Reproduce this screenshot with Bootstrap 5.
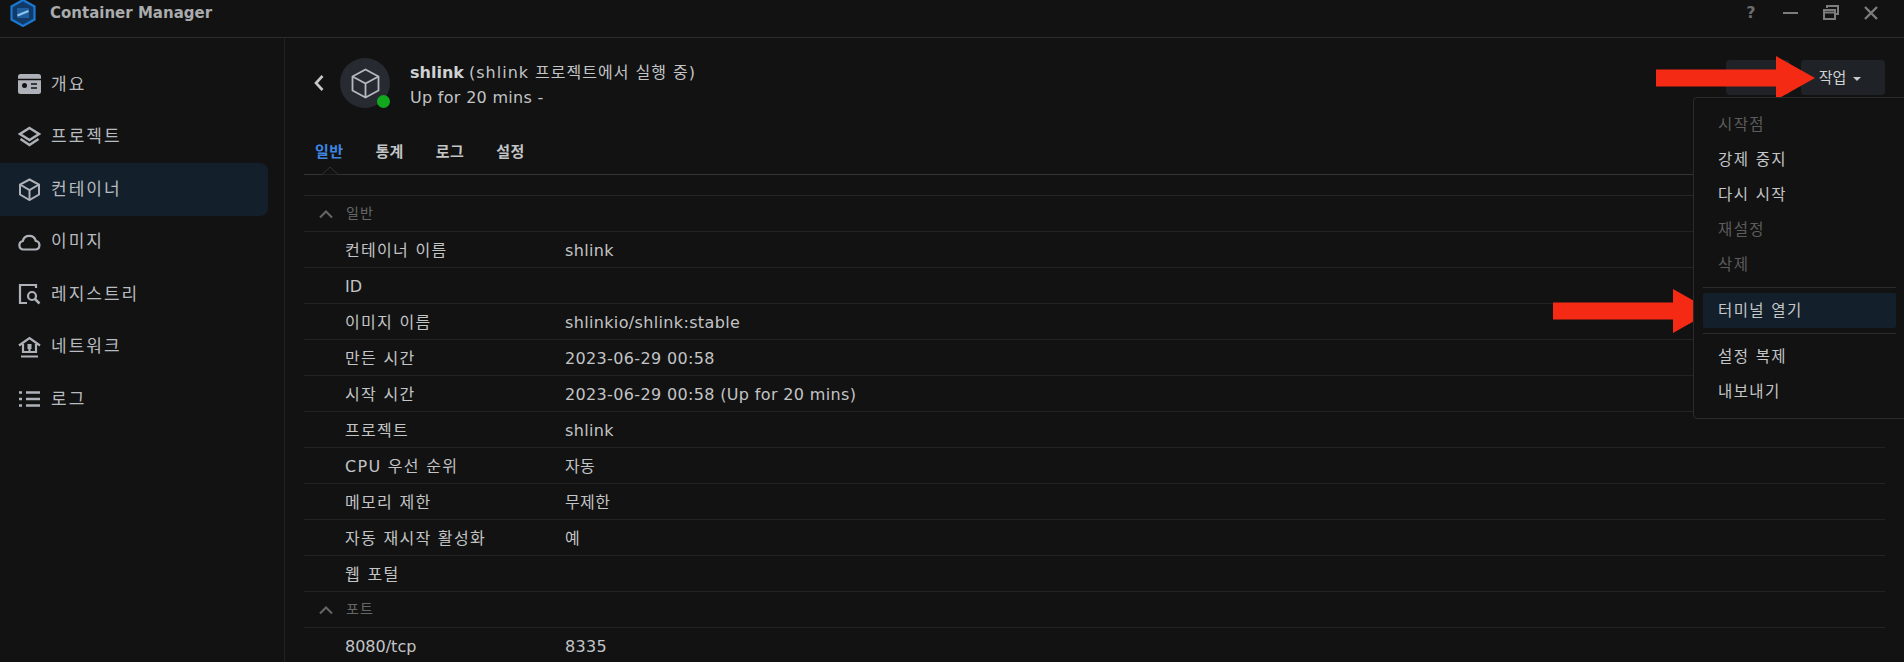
<!DOCTYPE html>
<html lang="ko">
<head>
    <meta charset="UTF-8">
    <meta name="viewport" content="width=device-width, initial-scale=1.0">
    <title>Container Manager</title>
    <link href="https://cdn.jsdelivr.net/npm/bootstrap@5.3.0/dist/css/bootstrap.min.css" rel="stylesheet">
    <style>
        html, body { height: 662px; overflow: hidden; }
        body { background: #121212; color: #c2c4c6; font-family: "DejaVu Sans", "Noto Sans CJK KR", sans-serif; font-size: 16px; }
        .app-frame { width: 1904px; height: 662px; position: relative; overflow: hidden; }
        .title-bar { height: 38px; border-bottom: 1px solid #2c2c2c; padding: 0 25px 11px 9px; }
        .app-title { font-size: 15px; font-weight: 700; color: #a9abad; margin-left: 13px; }
        .win-btns { gap: 24px; }
        .win-btns svg { display: block; }
        .help-mark { width: 16px; text-align: center; font-size: 16px; line-height: 16px; font-weight: 700; color: #6c6c6c; }
        .side-pane { width: 285px; height: 624px; border-right: 1px solid #222; padding-top: 20px; flex: none; }
        .side-link { height: 52.5px; width: 268px; padding-left: 18px; gap: 10px; color: #b8bbbf; border-radius: 0 8px 8px 0; letter-spacing: 2px; font-size: 17px; }
        .side-link.is-on { background: #13202c; }
        .main-pane { padding: 20px 19px 0 19px; min-width: 0; }
        .crumb-head { height: 50px; }
        .back-btn { width: 36px; padding-left: 1px; }
        .avatar-wrap { width: 50px; height: 50px; border-radius: 50%; background: #272b31; position: relative; }
        .status-dot { width: 13px; height: 13px; border-radius: 50%; background: #12a81e; position: absolute; right: 0; bottom: 0; border: 0; }
        .head-text { margin-left: 20px; padding-top: 3px; line-height: 25px; color: #c2c4c6; }
        .head-text b { color: #d0d1d2; }
        .head-paren { letter-spacing: 1px; }
        .head-state { letter-spacing: .3px; }
        .head-btn { height: 35px; background: #1f2327; border: 0; border-radius: 4px; color: #d0d2d4; font-size: 15px; }
        .btn-blank { width: 64px; margin-right: 11px; }
        .btn-action { width: 84px; padding: 2px 6px 0 0; }
        .action-caret { display: inline-block; border: 4px solid transparent; border-top-color: #c8cacc; border-bottom: 0; margin-left: 7px; vertical-align: 2px; }
        .head-tools { margin-top: 2px; }
        .tab-strip { height: 67px; border-bottom: 1px solid #333; position: relative; gap: 32px; padding-left: 11px; align-items: flex-end; }
        .tab-link { font-size: 15px; font-weight: 700; color: #c2c4c6; padding: 0 0 11px 0; letter-spacing: .4px; line-height: 22px; }
        .tab-link.is-on { color: #3f86e0; }
        .tab-notch { position: absolute; left: 15px; bottom: -1px; display: block; }
        .info-table { width: 100%; margin-top: 20px; border-top: 1px solid #262626; }
        .info-table td { height: 36px; padding: 3px 0 0 0; border-bottom: 1px solid #222; vertical-align: middle; line-height: 1; letter-spacing: .35px; }
        .info-table .key-cell { width: 261px; padding-left: 41px; letter-spacing: 1.3px; }
        .info-table .key-cell.key-latin { letter-spacing: 0; }
        .info-table .sect-cell { padding: 0 0 2px 14px; color: #666; font-size: 14px; letter-spacing: 1px; }
        .sect-cell svg { margin-right: 12px; vertical-align: -1px; }
        .action-menu { display: block; position: absolute; left: 1693px; top: 97px; width: 220px; height: 322px; margin: 0; background: #121212; border: 1px solid #2b2b2b; border-radius: 4px; padding: 9px; }
        .action-menu .dropdown-item { height: 35px; line-height: 37px; padding: 0 0 0 15px; color: #c4c6c8; font-size: 15.5px; letter-spacing: 1.4px; width: 193px; border-radius: 2px; }
        .action-menu .dropdown-item.disabled { color: #5c5c5c; }
        .action-menu .dropdown-item.is-on { background: #13202c; margin: 0 0 1px 0; }
        .action-menu .dropdown-divider { border-color: #2b2b2b; margin: 5px 0; width: 193px; opacity: 1; }
        .red-arrow { position: absolute; display: block; }
        .arrow-action { left: 1656px; top: 56px; }
        .arrow-terminal { left: 1553px; top: 289px; }
    </style>
</head>
<body>
    <div class="app-frame">
        <div class="title-bar d-flex align-items-center">
            <svg width="28" height="28" viewBox="0 0 28 28" class="flex-shrink-0">
                <path d="M14 1 25.5 7.5v13L14 27 2.5 20.5v-13z" fill="#123a68" stroke="#1a78d0" stroke-width="2.200"/>
                <path d="M8 9h12v10H8z" fill="#1f5d9e"/>
                <path d="M8.500 16.500l11-4.500" stroke="#8fc6ee" stroke-width="2"/>
            </svg>
            <span class="app-title">Container Manager</span>
            <div class="win-btns d-flex align-items-center ms-auto">
                <span class="help-mark">?</span>
                <svg width="16" height="16" viewBox="0 0 16 16"><path d="M0 8h15" stroke="#7c7c7c" stroke-width="2"/></svg>
                <svg width="16" height="16" viewBox="0 0 16 16"><path d="M4 3V1h11v8h-2M1 5h11v9H1zM1 7.500h11" fill="none" stroke="#7c7c7c" stroke-width="2"/></svg>
                <svg width="16" height="16" viewBox="0 0 16 16"><path d="M2 2l12 12M14 2 2 14" stroke="#7c7c7c" stroke-width="2.400"/></svg>
            </div>
        </div>

        <div class="d-flex">
            <nav class="side-pane nav flex-column flex-nowrap">
                <a class="side-link d-flex align-items-center text-decoration-none" href="#">
                    <svg width="23" height="20" viewBox="0 0 23 20"><rect width="23" height="20" rx="2.500" fill="#aeb2b8"/><path d="M0 5.500h23" stroke="#121212" stroke-width="1.500"/><circle cx="6.500" cy="11.500" r="2.500" fill="#121212"/><path d="M13 10h6M13 14h6" stroke="#121212" stroke-width="1.500"/></svg>
                    <span>개요</span>
                </a>
                <a class="side-link d-flex align-items-center text-decoration-none" href="#">
                    <svg width="23" height="22" viewBox="0 0 23 22" fill="none" stroke="#aeb2b8" stroke-width="2.400"><path d="M11.500 2 21 8l-9.500 6L2 8z"/><path d="M2.500 13l9 6 9-6"/></svg>
                    <span>프로젝트</span>
                </a>
                <a class="side-link is-on d-flex align-items-center text-decoration-none" href="#">
                    <svg width="23" height="23" viewBox="0 0 23 23" fill="none" stroke="#aeb2b8" stroke-width="2"><path d="M11.500 1.500 21 6.500v10l-9.500 5.500L2 16.500v-10z"/><path d="M2 6.500l9.500 5.500L21 6.500M11.500 12v10"/></svg>
                    <span>컨테이너</span>
                </a>
                <a class="side-link d-flex align-items-center text-decoration-none" href="#">
                    <svg width="23" height="18" viewBox="0 0 23 18" fill="none" stroke="#aeb2b8" stroke-width="2.200"><path d="M6 16.500H5.500a4.300 4.300 0 0 1-.7-8.500 6.700 6.700 0 0 1 13 0 4.300 4.300 0 0 1 0 8.500z"/></svg>
                    <span>이미지</span>
                </a>
                <a class="side-link d-flex align-items-center text-decoration-none" href="#">
                    <svg width="23" height="22" viewBox="0 0 23 22" fill="none" stroke="#aeb2b8" stroke-width="2.200"><path d="M18 5V2H2v18h7"/><circle cx="14" cy="13" r="4"/><path d="M17 16l4.500 4.500" stroke-width="2.500"/></svg>
                    <span>레지스트리</span>
                </a>
                <a class="side-link d-flex align-items-center text-decoration-none" href="#">
                    <svg width="23" height="22" viewBox="0 0 23 22" fill="none" stroke="#aeb2b8" stroke-width="2.200"><path d="M1 9.500 11.500 2 22 9.500M5 8v8h13V8"/><rect x="9.500" y="8" width="4" height="5" fill="#aeb2b8" stroke="none"/><path d="M11.500 13v4M3 20.500h17"/></svg>
                    <span>네트워크</span>
                </a>
                <a class="side-link d-flex align-items-center text-decoration-none" href="#">
                    <svg width="23" height="18" viewBox="0 0 23 18" fill="none" stroke="#aeb2b8" stroke-width="2.500"><path d="M1 2.500h3M8 2.500h14M1 9h3M8 9h14M1 15.500h3M8 15.500h14"/></svg>
                    <span>로그</span>
                </a>
            </nav>

            <main class="main-pane flex-grow-1">
                <div class="crumb-head d-flex align-items-center">
                    <div class="back-btn d-flex">
                        <svg width="12" height="18" viewBox="0 0 12 18" class="ms-2"><path d="M9.500 2 3 9l6.500 7" fill="none" stroke="#c8c8c8" stroke-width="2.600"/></svg>
                    </div>
                    <div class="avatar-wrap d-flex align-items-center justify-content-center">
                        <svg width="29" height="31" viewBox="0 0 29 31" fill="none" stroke="#b6b9bd" stroke-width="1.800"><path d="M14.500 1.500 27.500 8.500v14l-13 7-13-7v-14z" stroke-linejoin="round"/><path d="M1.500 8.500l13 7 13-7M14.500 15.500v14"/></svg>
                        <span class="status-dot"></span>
                    </div>
                    <div class="head-text">
                        <div><b>shlink</b> <span class="head-paren">(shlink 프로젝트에서 실행 중)</span></div>
                        <div class="head-state">Up for 20 mins -</div>
                    </div>
                    <div class="head-tools d-flex ms-auto align-self-start">
                        <button class="btn head-btn btn-blank" type="button"></button>
                        <button class="btn head-btn btn-action" type="button">작업<span class="action-caret"></span></button>
                    </div>
                </div>

                <div class="tab-strip nav">
                    <a class="tab-link is-on text-decoration-none" href="#">일반</a>
                    <a class="tab-link text-decoration-none" href="#">통계</a>
                    <a class="tab-link text-decoration-none" href="#">로그</a>
                    <a class="tab-link text-decoration-none" href="#">설정</a>
                    <svg class="tab-notch" width="22" height="9" viewBox="0 0 22 9"><path d="M0 8.500h3L11 1l8 7.500h3" fill="#121212" stroke="#333"/></svg>
                </div>

                <table class="info-table">
                    <tbody>
                        <tr><td class="sect-cell" colspan="2"><svg width="16" height="10" viewBox="0 0 16 10"><path d="M2 8.500 8 2.500l6 6" fill="none" stroke="#666" stroke-width="2"/></svg>일반</td></tr>
                        <tr><td class="key-cell">컨테이너 이름</td><td>shlink</td></tr>
                        <tr><td class="key-cell key-latin">ID</td><td></td></tr>
                        <tr><td class="key-cell">이미지 이름</td><td>shlinkio/shlink:stable</td></tr>
                        <tr><td class="key-cell">만든 시간</td><td>2023-06-29 00:58</td></tr>
                        <tr><td class="key-cell">시작 시간</td><td>2023-06-29 00:58 (Up for 20 mins)</td></tr>
                        <tr><td class="key-cell">프로젝트</td><td>shlink</td></tr>
                        <tr><td class="key-cell">CPU 우선 순위</td><td>자동</td></tr>
                        <tr><td class="key-cell">메모리 제한</td><td>무제한</td></tr>
                        <tr><td class="key-cell">자동 재시작 활성화</td><td>예</td></tr>
                        <tr><td class="key-cell">웹 포털</td><td></td></tr>
                        <tr><td class="sect-cell" colspan="2"><svg width="16" height="10" viewBox="0 0 16 10"><path d="M2 8.500 8 2.500l6 6" fill="none" stroke="#666" stroke-width="2"/></svg>포트</td></tr>
                        <tr><td class="key-cell key-latin">8080/tcp</td><td>8335</td></tr>
                    </tbody>
                </table>
            </main>
        </div>

        <ul class="dropdown-menu action-menu list-unstyled">
            <li><a class="dropdown-item disabled" href="#">시작점</a></li>
            <li><a class="dropdown-item" href="#">강제 중지</a></li>
            <li><a class="dropdown-item" href="#">다시 시작</a></li>
            <li><a class="dropdown-item disabled" href="#">재설정</a></li>
            <li><a class="dropdown-item disabled" href="#">삭제</a></li>
            <li><hr class="dropdown-divider"></li>
            <li><a class="dropdown-item is-on" href="#">터미널 열기</a></li>
            <li><hr class="dropdown-divider"></li>
            <li><a class="dropdown-item" href="#">설정 복제</a></li>
            <li><a class="dropdown-item" href="#">내보내기</a></li>
        </ul>

        <!-- annotation arrows on top of the screenshot -->
        <svg class="red-arrow arrow-action" width="160" height="44" viewBox="0 0 160 44"><path d="M0 13.500h120V0l39 22-39 22V30.500H0z" fill="#f52a14"/></svg>
        <svg class="red-arrow arrow-terminal" width="160" height="44" viewBox="0 0 160 44"><path d="M0 13.500h120V0l39 22-39 22V30.500H0z" fill="#f52a14"/></svg>
    </div>
    <script src="https://cdn.jsdelivr.net/npm/bootstrap@5.3.0/dist/js/bootstrap.bundle.min.js"></script>
</body>
</html>
